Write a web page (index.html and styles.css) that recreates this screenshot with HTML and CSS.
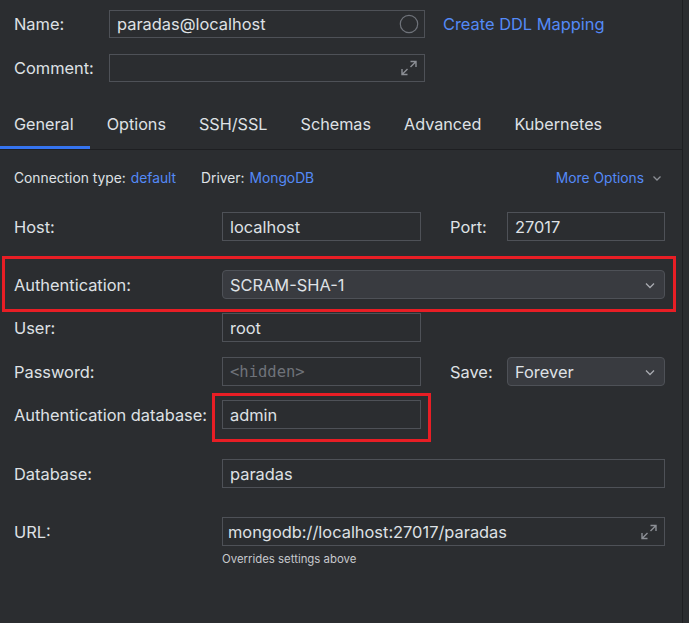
FILE: index.html
```html
<!DOCTYPE html>
<html>
<head>
<meta charset="utf-8">
<link rel="stylesheet" href="styles.css">
</head>
<body>
<div class="panel">
  <div class="top">
    <div class="trow">
      <span class="tlabel">Name:</span>
      <div class="field tfield">
        <span class="val">paradas@localhost</span>
        <svg class="ico" width="20" height="20" viewBox="0 0 20 20"><circle cx="10" cy="10" r="8.7" fill="none" stroke="#6f737a" stroke-width="1.2"/></svg>
      </div>
      <a class="link ddl">Create DDL Mapping</a>
    </div>
    <div class="trow trow2">
      <span class="tlabel">Comment:</span>
      <div class="field tfield">
        <span class="val"></span>
        <svg class="ico" width="20" height="20" viewBox="0 0 20 20"><path d="M11.5 3.5H17V9M17 3.5l-5.5 5.5M3 11v5.5h5.5M3 16.5l5.5-5.5" fill="none" stroke="#8c8f95" stroke-width="1.4"/></svg>
      </div>
    </div>
  </div>

  <div class="tabs">
    <div class="tab active">General</div>
    <div class="tab">Options</div>
    <div class="tab">SSH/SSL</div>
    <div class="tab">Schemas</div>
    <div class="tab">Advanced</div>
    <div class="tab">Kubernetes</div>
  </div>

  <div class="info">
    <span class="muted">Connection type:</span><span class="link">default</span>
    <span class="muted drv">Driver:</span><span class="link">MongoDB</span>
    <span class="link more">More Options
      <svg width="12" height="12" viewBox="0 0 12 12"><path d="M2.5 4.5L6 8l3.5-3.5" fill="none" stroke="#8c8f95" stroke-width="1.3"/></svg>
    </span>
  </div>

  <div class="form">
    <div class="row r-host">
      <span class="label">Host:</span>
      <div class="field w-short"><span class="val">localhost</span></div>
      <span class="label2">Port:</span>
      <div class="field w-port"><span class="val">27017</span></div>
    </div>
    <div class="row r-auth">
      <span class="label">Authentication:</span>
      <div class="field combo w-full"><span class="val">SCRAM-SHA-1</span>
        <svg width="14" height="14" viewBox="0 0 14 14"><path d="M3 5.5L7 9.5l4-4" fill="none" stroke="#a8abb0" stroke-width="1.3"/></svg>
      </div>
      <div class="hl hl-auth"></div>
    </div>
    <div class="row r-user">
      <span class="label">User:</span>
      <div class="field w-short"><span class="val">root</span></div>
    </div>
    <div class="row r-pass">
      <span class="label">Password:</span>
      <div class="field w-short"><span class="val mono">&lt;hidden&gt;</span></div>
      <span class="label2">Save:</span>
      <div class="field combo w-port"><span class="val">Forever</span>
        <svg width="14" height="14" viewBox="0 0 14 14"><path d="M3 5.5L7 9.5l4-4" fill="none" stroke="#a8abb0" stroke-width="1.3"/></svg>
      </div>
    </div>
    <div class="row r-adb">
      <span class="label">Authentication database:</span>
      <div class="field w-short adbf"><span class="val">admin</span>
        <div class="hl hl-adb"></div>
      </div>
    </div>
    <div class="row r-db">
      <span class="label">Database:</span>
      <div class="field w-full"><span class="val">paradas</span></div>
    </div>
    <div class="row r-url">
      <span class="label">URL:</span>
      <div class="field w-full url-f"><span class="val url">mongodb://localhost:27017/paradas</span>
        <svg class="ico" width="20" height="20" viewBox="0 0 20 20"><path d="M11.5 3.5H17V9M17 3.5l-5.5 5.5M3 11v5.5h5.5M3 16.5l5.5-5.5" fill="none" stroke="#8c8f95" stroke-width="1.4"/></svg>
      </div>
    </div>
    <div class="hint">Overrides settings above</div>
  </div>
</div>
</body>
</html>
```

FILE: styles.css
```css
html, body {
  margin: 0;
  padding: 0;
  background: #2b2d30;
  height: 100%;
}
body {
  font-family: Inter, "Noto Sans", sans-serif;
  color: #dfe1e5;
  font-size: 16.4px;
  overflow: hidden;
}
.panel {
  width: 683px;
  height: 623px;
  border-right: 1px solid #1e1f22;
  box-sizing: border-box;
}
.top {
  padding: 10px 0 0 14px;
}
.trow {
  display: flex;
  align-items: center;
  height: 28px;
}
.trow2 {
  margin-top: 16px;
}
.tlabel {
  width: 95px;
  flex: none;
}
.field {
  box-sizing: border-box;
  height: 29px;
  border: 1px solid #4e5157;
  background: #2b2d30;
  display: flex;
  align-items: center;
  padding: 0 7px;
  position: relative;
}
.tfield {
  width: 316px;
  height: 28px;
  justify-content: space-between;
}
.val {
  white-space: nowrap;
}
.ico {
  flex: none;
  margin-right: -2px;
}
.link {
  color: #548af7;
}
.ddl {
  margin-left: 18px;
}
.tabs {
  display: flex;
  height: 52px;
  margin-top: 16px;
  border-bottom: 1px solid #1e1f22;
  box-sizing: border-box;
  font-size: 16.2px;
}
.tab {
  padding: 0 16.5px;
  display: flex;
  align-items: center;
  color: #dfe1e5;
}
.tab:first-child {
  padding-left: 14px;
}
.tab.active {
  box-shadow: inset 0 -3px 0 #3574f0;
}
.info {
  display: flex;
  align-items: center;
  font-size: 13.8px;
  height: 20px;
  margin-top: 18px;
  padding-left: 14px;
  padding-right: 19px;
}
.info .muted {
  color: #dfe1e5;
  margin-right: 5px;
}
.drv {
  margin-left: 25px;
}
.more {
  margin-left: auto;
  display: flex;
  align-items: center;
  gap: 7px;
}
.form {
  padding-left: 14px;
  position: relative;
}
.row {
  display: flex;
  align-items: center;
  position: relative;
}
.label {
  width: 208px;
  flex: none;
}
.label2 {
  width: 57px;
  flex: none;
  padding-left: 29px;
  box-sizing: content-box;
}
.w-short {
  width: 199px;
}
.w-port {
  width: 158px;
}
.w-full {
  width: 443px;
}
.combo {
  background: #393b40;
  border-color: #4e5157;
  border-radius: 4px;
  justify-content: space-between;
}
.combo svg {
  flex: none;
}
.mono {
  font-family: "DejaVu Sans Mono", monospace;
  font-size: 15.5px;
  color: #6f737a;
}
.url-f {
  padding-left: 5px;
}
.w-full .ico {
  margin-left: auto;
}
.r-host { margin-top: 24px; }
.r-auth { margin-top: 29px; }
.r-user { margin-top: 14px; }
.r-pass { margin-top: 15px; }
.r-adb { margin-top: 14px; }
.r-db { margin-top: 30px; }
.r-url { margin-top: 29px; }
.hint {
  font-size: 11.4px;
  color: #c7c9cd;
  margin-left: 208px;
  margin-top: 6px;
}
.hl {
  position: absolute;
  border: 3px solid #e81e25;
  pointer-events: none;
}
.hl-auth {
  left: -12px;
  right: 6px;
  top: -14px;
  bottom: -13px;
}
.hl-adb {
  left: -11px;
  right: -11px;
  top: -8px;
  bottom: -14px;
}
```
